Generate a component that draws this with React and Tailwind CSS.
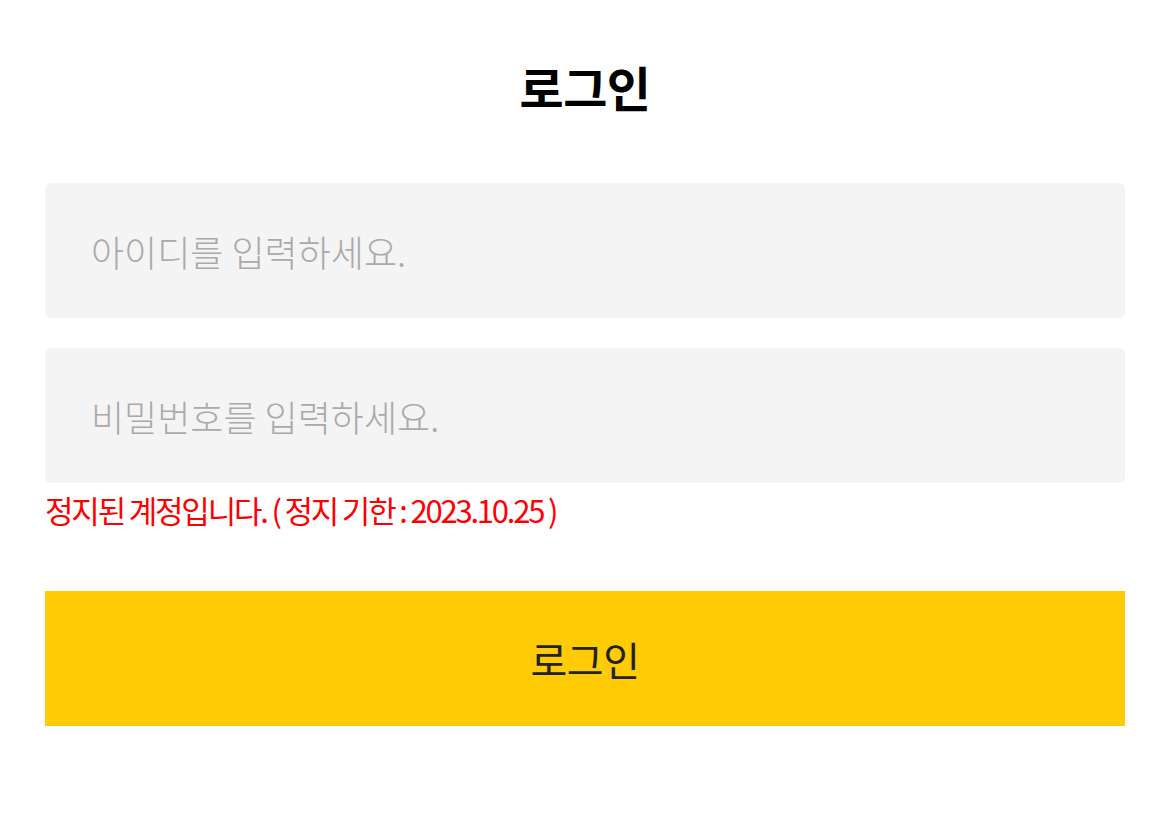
export default function App() {
  return (
    <div className="w-full min-h-[817px] bg-white px-[45px] pt-[50px]">
      <div className="font-['Noto_Sans_CJK_KR','Noto_Sans',sans-serif]">
        <h1 className="text-center text-[48px] leading-[72px] font-bold text-black tracking-[-0.5px]">로그인</h1>
        <div className="mt-[61px] flex flex-col gap-[30px]">
          <input
            className="h-[135px] w-full rounded-[6px] bg-[#f4f4f4] px-[46px] text-[36px] font-extralight text-[#333] placeholder:text-[#aaaaaa] outline-none"
            placeholder="아이디를 입력하세요."
          />
          <input
            type="password"
            className="h-[135px] w-full rounded-[6px] bg-[#f4f4f4] px-[46px] text-[36px] font-extralight text-[#333] placeholder:text-[#aaaaaa] outline-none"
            placeholder="비밀번호를 입력하세요."
          />
        </div>
        <p className="mt-[6px] text-[31px] leading-[42px] text-[#ff0000] tracking-[-2.2px]">정지된 계정입니다. ( 정지 기한 : 2023.10.25 )</p>
        <button className="mt-[60px] h-[135px] w-full bg-[#ffcb05] text-[40px] text-[#222] tracking-[-0.5px]">로그인</button>
      </div>
    </div>
  );
}
